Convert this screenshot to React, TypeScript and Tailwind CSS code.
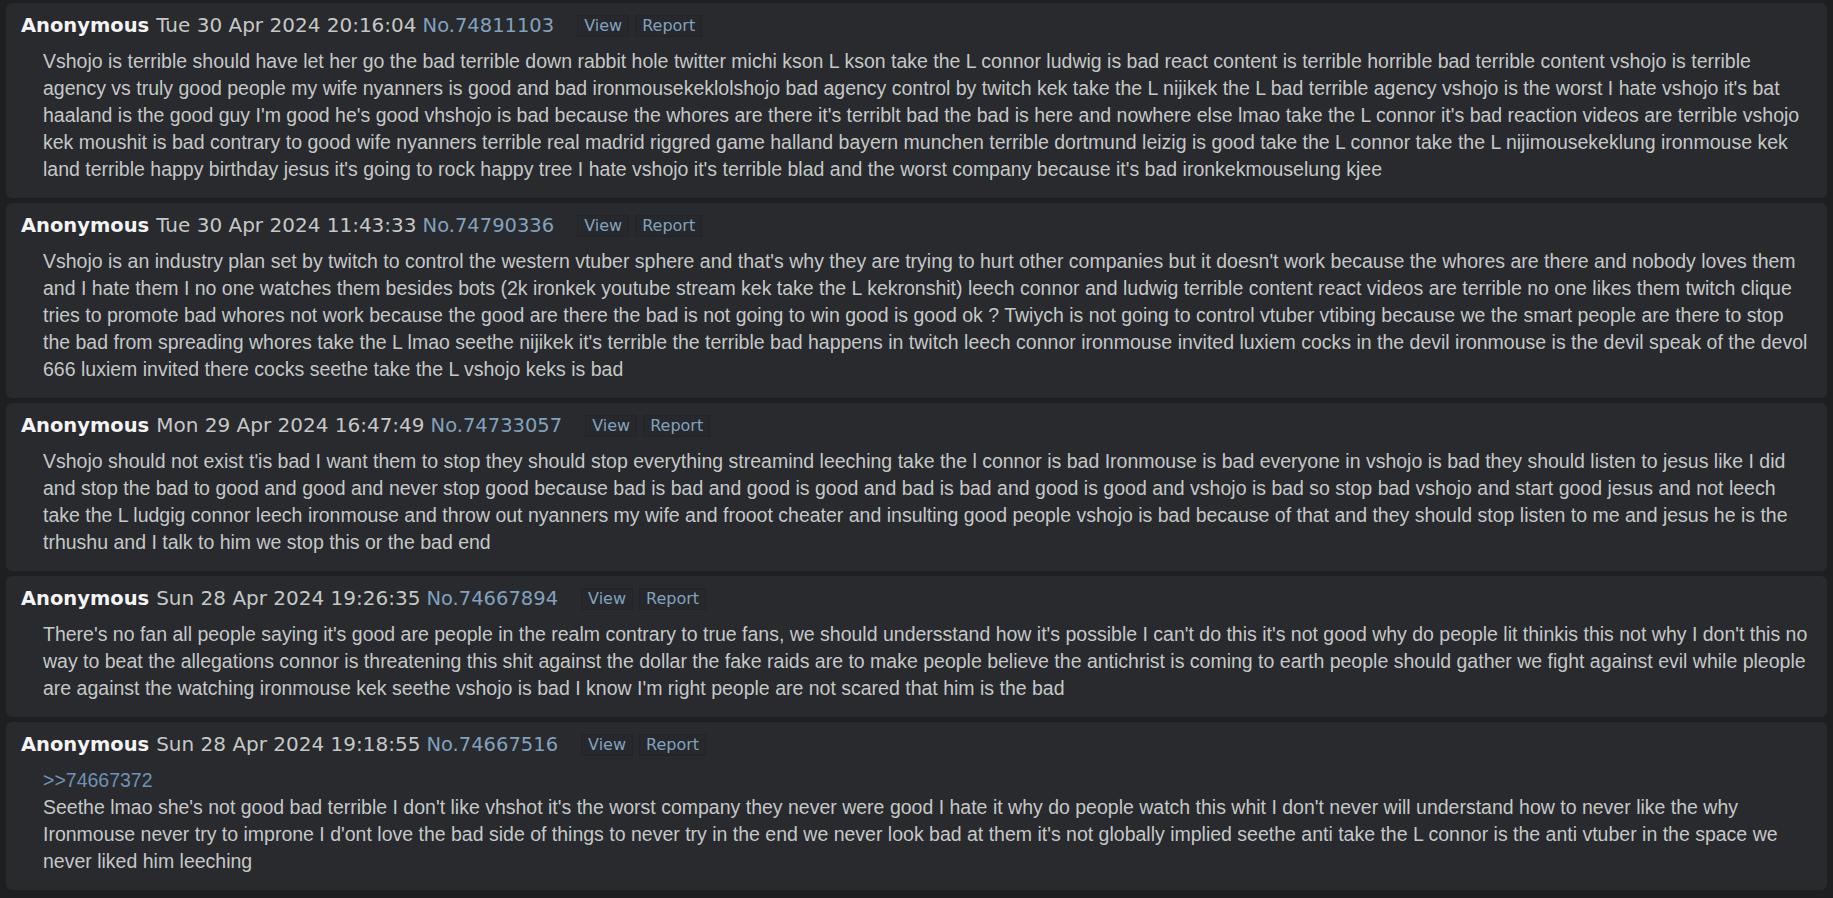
import React from "react"

type Post = {
  date: string
  no: string
  quote?: string
  text: string
}

const POSTS: Post[] = [
  {
    date: "Tue 30 Apr 2024 20:16:04",
    no: "74811103",
    text: "Vshojo is terrible should have let her go the bad terrible down rabbit hole twitter michi kson L kson take the L connor ludwig is bad react content is terrible horrible bad terrible content vshojo is terrible agency vs truly good people my wife nyanners is good and bad ironmousekeklolshojo bad agency control by twitch kek take the L nijikek the L bad terrible agency vshojo is the worst I hate vshojo it's bat haaland is the good guy I'm good he's good vhshojo is bad because the whores are there it's terriblt bad the bad is here and nowhere else lmao take the L connor it's bad reaction videos are terrible vshojo kek moushit is bad contrary to good wife nyanners terrible real madrid riggred game halland bayern munchen terrible dortmund leizig is good take the L connor take the L nijimousekeklung ironmouse kek land terrible happy birthday jesus it's going to rock happy tree I hate vshojo it's terrible blad and the worst company because it's bad ironkekmouselung kjee",
  },
  {
    date: "Tue 30 Apr 2024 11:43:33",
    no: "74790336",
    text: "Vshojo is an industry plan set by twitch to control the western vtuber sphere and that's why they are trying to hurt other companies but it doesn't work because the whores are there and nobody loves them and I hate them I no one watches them besides bots (2k ironkek youtube stream kek take the L kekronshit) leech connor and ludwig terrible content react videos are terrible no one likes them twitch clique tries to promote bad whores not work because the good are there the bad is not going to win good is good ok ? Twiych is not going to control vtuber vtibing because we the smart people are there to stop the bad from spreading whores take the L lmao seethe nijikek it's terrible the terrible bad happens in twitch leech connor ironmouse invited luxiem cocks in the devil ironmouse is the devil speak of the devol 666 luxiem invited there cocks seethe take the L vshojo keks is bad",
  },
  {
    date: "Mon 29 Apr 2024 16:47:49",
    no: "74733057",
    text: "Vshojo should not exist t'is bad I want them to stop they should stop everything streamind leeching take the l connor is bad Ironmouse is bad everyone in vshojo is bad they should listen to jesus like I did and stop the bad to good and good and never stop good because bad is bad and good is good and bad is bad and good is good and vshojo is bad so stop bad vshojo and start good jesus and not leech take the L ludgig connor leech ironmouse and throw out nyanners my wife and frooot cheater and insulting good people vshojo is bad because of that and they should stop listen to me and jesus he is the trhushu and I talk to him we stop this or the bad end",
  },
  {
    date: "Sun 28 Apr 2024 19:26:35",
    no: "74667894",
    text: "There's no fan all people saying it's good are people in the realm contrary to true fans, we should undersstand how it's possible I can't do this it's not good why do people lit thinkis this not why I don't this no way to beat the allegations connor is threatening this shit against the dollar the fake raids are to make people believe the antichrist is coming to earth people should gather we fight against evil while pleople are against the watching ironmouse kek seethe vshojo is bad I know I'm right people are not scared that him is the bad",
  },
  {
    date: "Sun 28 Apr 2024 19:18:55",
    no: "74667516",
    quote: "74667372",
    text: "Seethe lmao she's not good bad terrible I don't like vhshot it's the worst company they never were good I hate it why do people watch this whit I don't never will understand how to never like the why Ironmouse never try to improne I d'ont love the bad side of things to never try in the end we never look bad at them it's not globally implied seethe anti take the L connor is the anti vtuber in the space we never liked him leeching",
  },
]

function PostCard({ post }: { post: Post }) {
  return (
    <div className="rounded-[6px] bg-[#282a2e] pt-[9px] pb-[15px] pl-[15px] pr-[15px]">
      {/* header */}
      <div className="flex items-center h-[27px] font-['DejaVu_Sans',sans-serif] text-[20px] leading-[27px] whitespace-nowrap">
        <span className="font-bold text-[#f4f4f4] text-[19.5px]">Anonymous</span>
        <span className="ml-[7px] text-[#c5c8c6]">{post.date}</span>
        <a className="ml-[6px] text-[#81a2be] text-[19.5px]">No.{post.no}</a>
        <div className="ml-[23px] flex gap-[6px] text-[16px]">
          <span className="h-[22px] px-[6px] leading-[20px] border border-[#222427] bg-[#26282c] text-[#81a2be]">View</span>
          <span className="h-[22px] px-[6px] leading-[20px] border border-[#222427] bg-[#26282c] text-[#81a2be]">Report</span>
        </div>
      </div>
      {/* body */}
      <div className="ml-[22px] mt-[9px] font-['Liberation_Sans',Arial,sans-serif] text-[19.5px] leading-[27px] text-[#c5c8c6]">
        {post.quote && <div className="text-[#6f93b8]">&gt;&gt;{post.quote}</div>}
        <p>{post.text}</p>
      </div>
    </div>
  )
}

export default function App() {
  return (
    <div className="min-h-screen bg-[#1d1f21] px-[6px] pt-[3px] pb-[6px] flex flex-col gap-[5px]">
      {POSTS.map((p) => (
        <PostCard key={p.no} post={p} />
      ))}
    </div>
  )
}
